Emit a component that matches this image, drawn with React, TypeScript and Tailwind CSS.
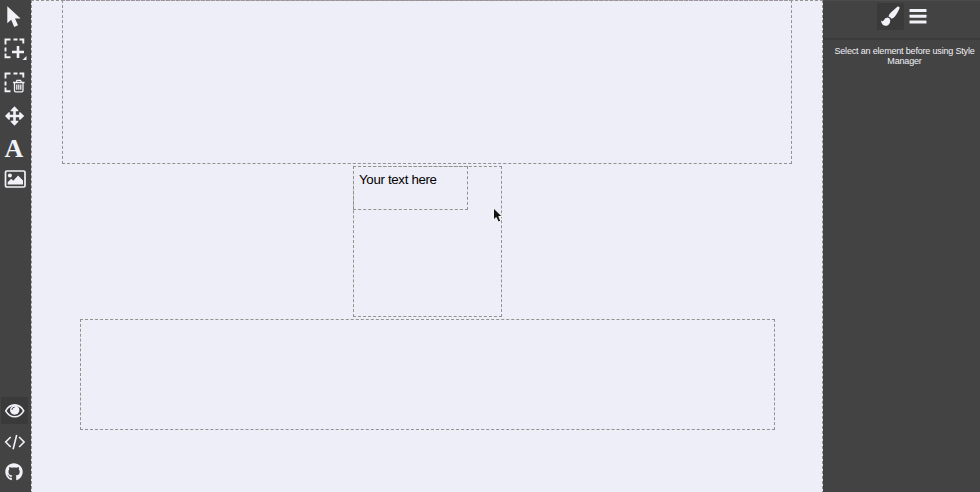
import React from "react";
import { FaGithub } from "react-icons/fa";

const frame = "border border-dashed border-[#92928f]";

function Brackets() {
  return (
    <path
      d="M1.5 6.5V1.5H6.5 M9.5 1.5H13.5 M15.5 1.5H19.3V5.5 M1.5 9.5V13.5 M1.5 15.5V19.3H6.5"
      fill="none"
      stroke="currentColor"
      strokeWidth="1.9"
    />
  );
}

function Toolbar() {
  return (
    <aside className="flex w-[31px] shrink-0 flex-col justify-between bg-[#434343] text-[#f1f1f8]">
      <div className="flex flex-col pl-1">
        <svg className="mt-1.5 ml-[3px] h-[22px] w-[14px]" viewBox="0 0 14 22" fill="currentColor">
          <path d="M0.3 0.3V17.2L4.2 13.7L7.2 20.9L11 19.2L8 12.5H13.6Z" />
        </svg>
        <svg className="mt-[10px] h-[23px] w-[23px]" viewBox="0 0 23 23">
          <Brackets />
          <path d="M14 8V20M8 14H20" stroke="currentColor" strokeWidth="2.6" />
          <path d="M22.5 18V22H18.5Z" fill="currentColor" />
        </svg>
        <svg className="mt-[11px] h-[21px] w-[21px]" viewBox="0 0 21 21" fill="none" stroke="currentColor">
          <Brackets />
          <path d="M9 10.5H20.5M12.3 9.8L13 8.3H16.5L17.2 9.8M10.5 11V18.4Q10.5 19.8 11.7 19.8H17.8Q19 19.8 19 18.4V11M12.8 12.5V17.7M14.8 12.5V17.7M16.8 12.5V17.7" strokeWidth="1.3" />
        </svg>
        <svg className="mt-[13px] ml-px h-5 w-5" viewBox="0 0 20 20" fill="currentColor">
          <path d="M9.5 0.3L13.3 4.2V5.3H10.8V8.7H14.2V6.2H15.3L19.2 10L15.3 13.8H14.2V11.3H10.8V14.7H13.3V15.8L9.5 19.7L5.7 15.8V14.7H8.2V11.3H4.8V13.8H3.7L-0.1 10L3.7 6.2H4.8V8.7H8.2V5.3H5.7V4.2Z" />
        </svg>
        <span className="mt-[7px] h-[30px] w-5 text-center font-['Liberation_Serif',serif] text-[26px] leading-[31px] font-bold">A</span>
        <svg className="mt-[7px] h-[18px] w-[22px]" viewBox="0 0 22 18">
          <rect x="1.5" y="1" width="19.5" height="16" rx="1.3" fill="none" stroke="currentColor" strokeWidth="1.7" />
          <circle cx="5.9" cy="5.5" r="2" fill="currentColor" />
          <path d="M3.7 14.6V12.3L7.2 8.8L9.2 10.8L14.1 5.5L19 10.5V14.6Z" fill="currentColor" />
        </svg>
      </div>
      <div className="flex flex-col">
        <div className="ml-px flex h-[27px] w-[27px] items-center justify-center bg-[#3a3a3a]">
          <svg className="h-[14px] w-5" viewBox="0 0 20 14">
            <path d="M0.7 6.8Q4.2 0.9 9.7 0.9T18.7 6.8Q15.2 12.7 9.7 12.7T0.7 6.8Z" fill="none" stroke="currentColor" strokeWidth="1.6" />
            <circle cx="9.7" cy="6" r="4.7" fill="currentColor" />
            <path d="M6.9 6Q6.9 3.2 9.7 3.2" fill="none" stroke="#3a3a3a" strokeWidth="0.9" />
          </svg>
        </div>
        <svg className="mt-[10px] ml-1 h-4 w-[21px]" viewBox="0 0 21 16" fill="none" stroke="currentColor" strokeWidth="1.6">
          <path d="M6.7 3L1.7 8L6.7 13M15.1 3L20.1 8L15.1 13M12.7 1L9.1 15.2" />
        </svg>
        <FaGithub className="mt-[13px] mb-[11px] ml-[5px] h-[18px] w-[18px]" />
      </div>
    </aside>
  );
}

function Canvas() {
  return (
    <main className={`${frame} flex h-[494px] w-[792px] shrink-0 flex-col bg-[#eeeef8]`}>
      <section className={`${frame} -mt-px ml-[30px] h-[164px] w-[730px] shrink-0 border-t-[#a195a2]`} />
      <section className={`${frame} mt-0.5 ml-[321px] h-[151px] w-[149px] shrink-0`}>
        <div className={`${frame} -mt-px -ml-px h-[44px] w-[115px] pt-[3px] pl-[5px] font-['Liberation_Sans',sans-serif] text-[13.3px] leading-[20px] tracking-[-0.33px] whitespace-nowrap text-black`}>
          Your text here
        </div>
      </section>
      <section className={`${frame} mt-0.5 ml-[48px] h-[111px] w-[695px] shrink-0`} />
    </main>
  );
}

function StylePanel() {
  return (
    <aside className="min-w-0 flex-1 border-t border-[#4c4c4c] bg-[#434343] text-[#f1f1f8]">
      <header className="flex h-[39px] border-b-2 border-[#3b3b3b] pt-0.5 pl-[54px]">
        <div className="flex h-[27px] w-[27px] items-center justify-center bg-[#3a3a3a]">
          <svg className="h-[21px] w-[21px]" viewBox="0 0 21 21" fill="currentColor">
            <path d="M17.3 0.8Q18.2 0.2 19 0.7Q20 1.4 19.4 2.8Q17.6 6.8 15.3 10Q13.4 12.7 11.2 12.8Q10.5 11 8.5 10.5Q8.7 8.5 10.9 6.6Z" />
            <path d="M7.6 11.6Q9.8 11.8 10.3 14.2Q10.5 17.2 8.3 18.9Q6.4 20.2 4.2 19.6Q1.6 18.8 1 14.6Q2.9 15.8 3.6 14.4Q5 11.6 7.6 11.6Z" />
          </svg>
        </div>
        <svg className="mt-1.5 ml-[5px] h-4 w-[18px]" viewBox="0 0 18 16" fill="currentColor">
          <rect x="0.5" y="0" width="17" height="3" rx="0.5" />
          <rect x="0.5" y="5.7" width="17" height="3" rx="0.5" />
          <rect x="0.5" y="11.4" width="17" height="3" rx="0.5" />
        </svg>
      </header>
      <p className="pt-[7px] pl-[6px] text-center font-['Liberation_Sans',sans-serif] text-[9px] leading-[9.5px] tracking-[-0.18px] whitespace-nowrap">
        Select an element before using Style
        <br />
        Manager
      </p>
    </aside>
  );
}

export default function App() {
  return (
    <div className="relative flex h-[492px] w-[980px] overflow-hidden bg-[#434343]">
      <Toolbar />
      <Canvas />
      <StylePanel />
      <svg className="absolute top-[207px] left-[492px] h-[16px] w-[11px]" viewBox="0 0 11 16">
        <path d="M1.5 1V13L4.2 10.5L6.3 15L8.7 14L6.8 9.5H10.2Z" fill="#111" stroke="#fff" strokeWidth="0.9" />
      </svg>
    </div>
  );
}
